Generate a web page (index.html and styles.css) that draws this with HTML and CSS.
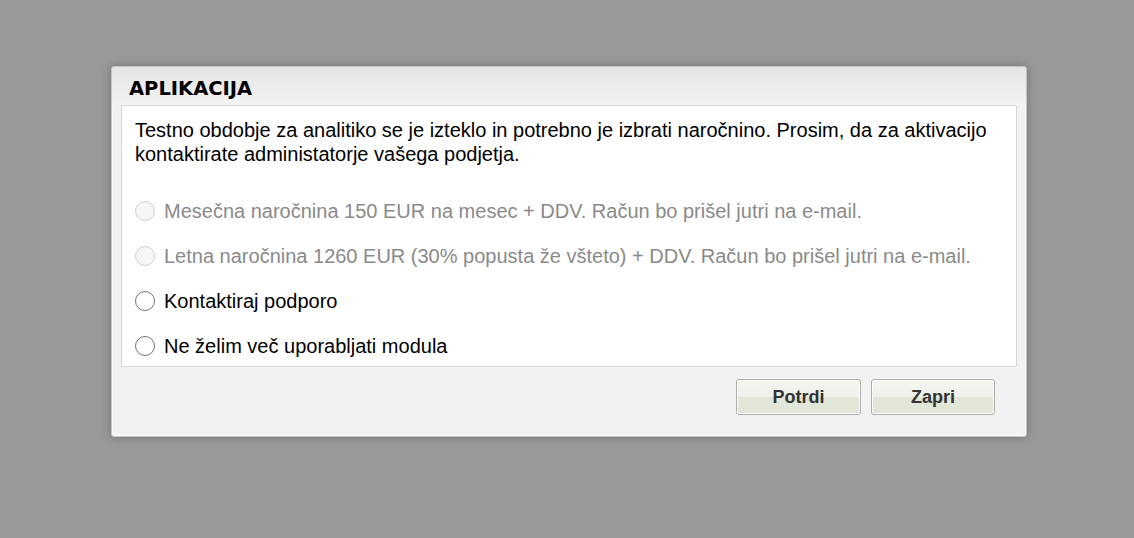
FILE: index.html
```html
<!DOCTYPE html>
<html>
<head>
<meta charset="utf-8">
<link rel="stylesheet" href="styles.css">
</head>
<body>
<div class="overlay">
  <div class="dialog">
    <div class="titlebar">APLIKACIJA</div>
    <div class="content">
      <p class="message">Testno obdobje za analitiko se je izteklo in potrebno je izbrati naročnino. Prosim, da za aktivacijo kontaktirate administatorje vašega podjetja.</p>
      <div class="options">
        <label class="option disabled"><span class="radio"></span><span>Mesečna naročnina 150 EUR na mesec + DDV. Račun bo prišel jutri na e-mail.</span></label>
        <label class="option disabled"><span class="radio"></span><span>Letna naročnina 1260 EUR (30% popusta že všteto) + DDV. Račun bo prišel jutri na e-mail.</span></label>
        <label class="option"><span class="radio"></span><span>Kontaktiraj podporo</span></label>
        <label class="option"><span class="radio"></span><span>Ne želim več uporabljati modula</span></label>
      </div>
    </div>
    <div class="footer">
      <button class="btn btn-wide">Potrdi</button>
      <button class="btn">Zapri</button>
    </div>
  </div>
</div>
</body>
</html>
```
FILE: styles.css
```css
html, body {
  margin: 0;
  padding: 0;
  background: #999999;
  height: 538px;
  overflow: hidden;
}
.overlay {
  padding: 66px 0 0 111px;
}
.dialog {
  width: 916px;
  box-sizing: border-box;
  background: #f2f2f2;
  border: 1px solid #c4c4c4;
  border-radius: 3px;
  box-shadow: 0 0 10px rgba(0,0,0,0.25), inset 0 0 0 1px #fafafa;
}
.titlebar {
  height: 38px;
  box-sizing: border-box;
  padding-left: 17px;
  display: flex;
  align-items: center;
  padding-top: 4px;
  font-family: "DejaVu Sans", Verdana, sans-serif;
  font-weight: bold;
  font-size: 19.5px;
  color: #000;
  background: linear-gradient(#e4e4e4, #f3f3f3);
  border-radius: 3px 3px 0 0;
}
.content {
  margin: 0 9px;
  background: #fff;
  border: 1px solid #d6d6d6;
  padding: 12px 13px 8px;
  font-family: "Liberation Sans", Arial, sans-serif;
  font-size: 20px;
  color: #000;
}
.message {
  margin: 0;
  line-height: 24px;
}
.options {
  display: flex;
  flex-direction: column;
  gap: 21px;
  margin-top: 33px;
}
.option {
  display: flex;
  align-items: center;
  gap: 9px;
  line-height: 24px;
}
.radio {
  width: 18px;
  height: 18px;
  border: 1.5px solid #737373;
  border-radius: 50%;
  background: #fff;
  flex: none;
}
.option.disabled {
  color: #8a8a8a;
}
.option.disabled .radio {
  border-color: #cfcfcf;
  background: #f6f6f6;
}
.footer {
  height: 69px;
  box-sizing: border-box;
  display: flex;
  justify-content: flex-end;
  align-items: flex-start;
  gap: 10px;
  padding: 12px 31px 0 0;
}
.btn {
  width: 124px;
  height: 36px;
  border: 1px solid #adadad;
  border-radius: 3px;
  background: linear-gradient(#f4f6f1 0%, #eef1ea 50%, #e1e6d9 50%, #e1e6d9 100%);
  box-shadow: inset 0 0 0 1px #fff;
  font-family: "Liberation Sans", Arial, sans-serif;
  font-weight: bold;
  font-size: 18px;
  color: #333;
  padding: 0;
}
.btn-wide {
  width: 125px;
}
```
